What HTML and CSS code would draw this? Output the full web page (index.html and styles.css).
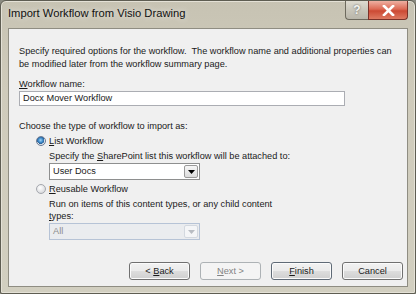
FILE: index.html
```html
<!DOCTYPE html>
<html lang="en">
<head>
    <meta charset="UTF-8">
    <title>Import Workflow from Visio Drawing</title>
    <link rel="stylesheet" href="styles.css">
</head>
<body>
<div class="window">
    <div class="titlebar">
        <span class="title">Import Workflow from Visio Drawing</span>
        <div class="caption-buttons">
            <span class="cap help">?</span>
            <span class="cap close">
                <svg width="13" height="11" viewBox="0 0 13 11">
                    <path d="M2 1 L11 10 M11 1 L2 10" stroke="#fff" stroke-width="2.6" stroke-linecap="square"/>
                </svg>
            </span>
        </div>
    </div>
    <div class="client">
        <p class="intro">Specify required options for the workflow.&nbsp; The workflow name and additional properties can<br>be modified later from the workflow summary page.</p>

        <label class="label"><u>W</u>orkflow name:</label>
        <div class="textbox">Docx Mover Workflow</div>

        <p class="label choose">Choose the type of workflow to import as:</p>

        <div class="option">
            <span class="radio checked"></span>
            <span><u>L</u>ist Workflow</span>
        </div>
        <div class="sub">
            <p class="label">Specify the <u>S</u>harePoint list this workflow will be attached to:</p>
            <div class="combo">
                <span class="combo-text">User Docs</span>
                <span class="combo-btn">
                    <svg width="7" height="4" viewBox="0 0 7 4"><path d="M0 0 H7 L3.5 4 Z" fill="#000"/></svg>
                </span>
            </div>
        </div>

        <div class="option">
            <span class="radio"></span>
            <span><u>R</u>eusable Workflow</span>
        </div>
        <div class="sub">
            <p class="label">Run on items of this content types, or any child content<br><u>t</u>ypes:</p>
            <div class="combo disabled">
                <span class="combo-text">All</span>
                <span class="combo-btn">
                    <svg width="7" height="4" viewBox="0 0 7 4"><path d="M0 0 H7 L3.5 4 Z" fill="#b8bcc2"/></svg>
                </span>
            </div>
        </div>

        <div class="buttons">
            <button class="btn">&lt; <u>B</u>ack</button>
            <button class="btn" disabled><u>N</u>ext &gt;</button>
            <button class="btn default"><u>F</u>inish</button>
            <button class="btn">Cancel</button>
        </div>
    </div>
</div>
</body>
</html>
```

FILE: styles.css
```css
body, html {
    margin: 0;
    width: 416px;
    height: 294px;
    overflow: hidden;
    font-family: 'Liberation Sans', Arial, sans-serif;
    font-size: 9.2px;
    color: #1a1a1a;
    background: #8a8a80;
}
.window {
    box-sizing: border-box;
    width: 416px;
    height: 294px;
    border: 1px solid #5e5d52;
    border-radius: 6px 6px 2px 2px;
    background: linear-gradient(180deg, #c7c3b3 0%, #cfcbbb 30%, #d2cfc0 100%);
    box-shadow: inset 0 0 0 1px #e4e1d6;
    padding: 0 7px 6px 7px;
    display: flex;
    flex-direction: column;
}
.titlebar {
    height: 27px;
    display: flex;
    align-items: flex-start;
    justify-content: space-between;
}
.title {
    margin-top: 6px;
    font-size: 11.2px;
    color: #111;
    text-shadow: 0 0 6px rgba(255, 255, 255, 0.8);
}
.caption-buttons {
    display: flex;
}
.cap {
    height: 18px;
    display: flex;
    align-items: center;
    justify-content: center;
    border: 1px solid #6d6a5e;
    border-top: none;
}
.help {
    width: 22px;
    border-radius: 0 0 0 4px;
    border-right: none;
    background: linear-gradient(180deg, #dedbd0 0%, #c9c6ba 50%, #b9b6aa 100%);
    color: #f4f4f0;
    font-size: 12px;
    font-weight: bold;
    text-shadow: 0 0 2px #555;
}
.close {
    width: 38px;
    border-radius: 0 0 4px 0;
    border-color: #7a3128;
    background: linear-gradient(180deg, #eeb0a2 0%, #dc6a55 45%, #cc4a34 55%, #de7a62 100%);
}
.client {
    flex: 1;
    background: #f0f0f0;
    border: 1px solid #8f8d82;
    padding: 0 4px 0 10px;
    display: flex;
    flex-direction: column;
}
p {
    margin: 0;
}
.intro {
    margin-top: 16px;
    line-height: 13px;
    white-space: nowrap;
}
.label {
    line-height: 12px;
}
label.label {
    margin-top: 7px;
}
.textbox {
    box-sizing: border-box;
    margin-top: 1px;
    width: 326px;
    height: 15px;
    border: 1px solid #abadb3;
    background: #fff;
    padding: 0 3px;
    line-height: 13px;
}
.choose {
    margin-top: 14px;
}
.option {
    margin-top: 3px;
    margin-left: 17px;
    display: flex;
    align-items: center;
    gap: 3px;
    line-height: 12px;
}
.radio {
    box-sizing: border-box;
    width: 10px;
    height: 10px;
    border-radius: 50%;
    border: 1px solid #a4a7ad;
    background: radial-gradient(circle at 40% 35%, #ffffff 0%, #dcdde0 70%, #c9cace 100%);
}
.radio.checked {
    border-color: #6a7a93;
    background: radial-gradient(circle at 45% 40%, #9fd3f5 0%, #3c89c8 35%, #2b5f94 55%, #e6e9ee 60%, #cfd3da 100%);
}
.sub {
    margin-left: 30px;
    margin-top: 3px;
}
.combo {
    box-sizing: border-box;
    margin-top: 1px;
    width: 151px;
    height: 17px;
    border: 1px solid #8e8f8f;
    background: #fff;
    display: flex;
    align-items: center;
    justify-content: space-between;
    padding: 0 1px 0 3px;
}
.combo-text {
    line-height: 15px;
}
.combo-btn {
    box-sizing: border-box;
    width: 14px;
    height: 13px;
    border: 1px solid #9a9a9a;
    border-radius: 2px;
    background: linear-gradient(180deg, #f7f7f7, #dcdcdc);
    display: flex;
    align-items: center;
    justify-content: center;
}
.combo.disabled {
    border-color: #b6c3d6;
    background: #eaecef;
    color: #8d8d8d;
}
.combo.disabled .combo-btn {
    border-color: #d3d8df;
    background: #f4f5f7;
}
.buttons {
    margin-top: auto;
    margin-bottom: 6px;
    display: flex;
    justify-content: flex-end;
    gap: 10px;
}
.btn {
    box-sizing: border-box;
    width: 61px;
    height: 18px;
    padding: 0;
    font-family: inherit;
    font-size: 9.2px;
    color: #1a1a1a;
    border: 1px solid #707070;
    border-radius: 3px;
    background: linear-gradient(180deg, #f2f2f2 0%, #ebebeb 48%, #dddddd 52%, #cfcfcf 100%);
    box-shadow: inset 0 0 0 1px #fbfbfb;
}
.btn:disabled {
    border-color: #adb2b5;
    background: #f4f4f4;
    color: #838383;
    box-shadow: none;
}
.btn.default {
    border-color: #5f6a76;
}
```
